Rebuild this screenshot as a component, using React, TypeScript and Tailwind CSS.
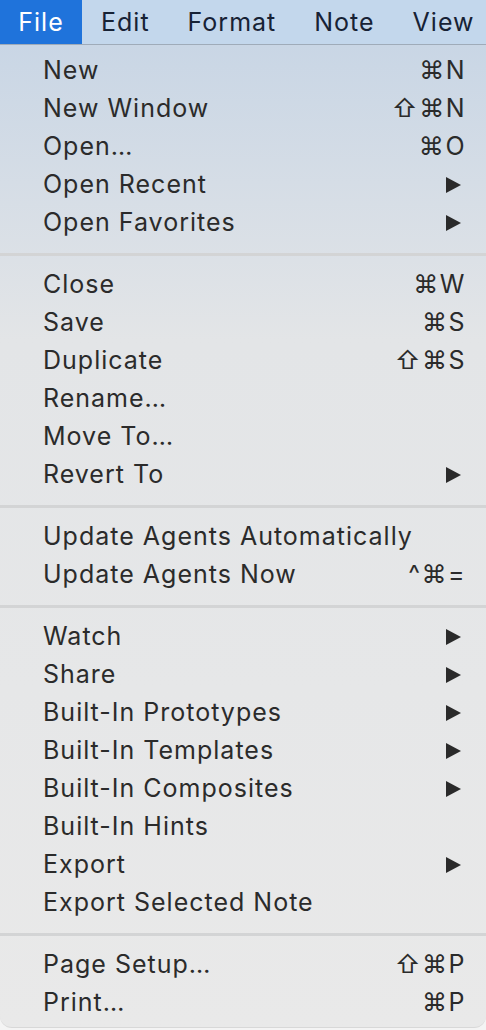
type Item = { label: string; keys?: string; sub?: boolean };

const groups: Item[][] = [
  [
    { label: 'New', keys: '⌘N' },
    { label: 'New Window', keys: '⇧⌘N' },
    { label: 'Open…', keys: '⌘O' },
    { label: 'Open Recent', sub: true },
    { label: 'Open Favorites', sub: true },
  ],
  [
    { label: 'Close', keys: '⌘W' },
    { label: 'Save', keys: '⌘S' },
    { label: 'Duplicate', keys: '⇧⌘S' },
    { label: 'Rename…' },
    { label: 'Move To…' },
    { label: 'Revert To', sub: true },
  ],
  [
    { label: 'Update Agents Automatically' },
    { label: 'Update Agents Now', keys: '^⌘=' },
  ],
  [
    { label: 'Watch', sub: true },
    { label: 'Share', sub: true },
    { label: 'Built-In Prototypes', sub: true },
    { label: 'Built-In Templates', sub: true },
    { label: 'Built-In Composites', sub: true },
    { label: 'Built-In Hints' },
    { label: 'Export', sub: true },
    { label: 'Export Selected Note' },
  ],
  [
    { label: 'Page Setup…', keys: '⇧⌘P' },
    { label: 'Print…', keys: '⌘P' },
  ],
];

const Arrow = () => (
  <svg width="17" height="18" viewBox="0 0 17 18" className="mr-[4px]">
    <path d="M1 1 L16 9 L1 17 Z" fill="#2a2a2a" />
  </svg>
);

const Row = ({ item }: { item: Item }) => (
  <div className="h-[38px] flex items-center justify-between pl-[43px] pr-[20px]">
    <span className="text-[25px] tracking-[1px] text-[#2b2b2b]">{item.label}</span>
    {item.keys && (
      <span className="text-[25px] text-[#2b2b2b] tracking-[1.5px]">{item.keys}</span>
    )}
    {item.sub && <Arrow />}
  </div>
);

export default function App() {
  return (
    <div
      className="w-[486px] h-[1030px] bg-[#f4f4f4]"
      style={{ fontFamily: "Inter, 'DejaVu Sans', sans-serif" }}
    >
      <div className="h-[45px] flex items-stretch bg-[#c3d7ec] border-b border-[#9fabb9] text-[25px] tracking-[1px] text-[#172235]">
        <div className="w-[82px] bg-[#1f73db] text-white flex items-center justify-center pt-[1px]">File</div>
        <div className="pl-[19px] flex items-center pt-[1px]">Edit</div>
        <div className="pl-[38px] flex items-center pt-[1px]">Format</div>
        <div className="pl-[38px] flex items-center pt-[1px]">Note</div>
        <div className="pl-[38px] flex items-center pt-[1px]">View</div>
      </div>
      <div className="h-[983px] rounded-b-[12px] border-b border-[#d8d8d8] bg-gradient-to-b from-[#c9d6e5] via-[#e3e5e7] via-30% to-[#e9e9e9] pt-[7px]">
        {groups.map((g, i) => (
          <div key={i}>
            {i > 0 && (
              <div className="h-[24px] flex items-center">
                <div className="h-[3px] w-full bg-[#d3d4d5]" />
              </div>
            )}
            {g.map((it) => (
              <Row key={it.label} item={it} />
            ))}
          </div>
        ))}
      </div>
    </div>
  );
}
